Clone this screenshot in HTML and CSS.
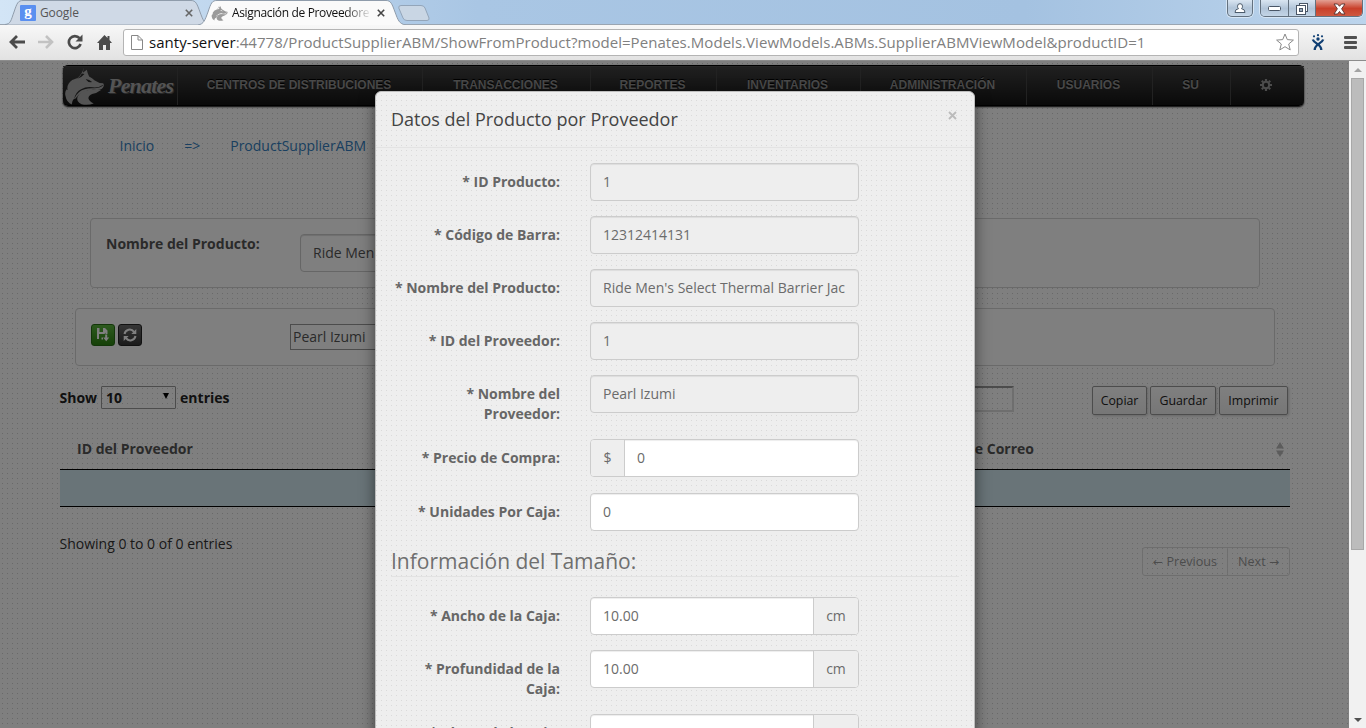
FILE: index.html
```html
<!DOCTYPE html>
<html lang="es">
<head>
<meta charset="utf-8">
<title>Asignación de Proveedores</title>
<link rel="stylesheet" href="styles.css">
</head>
<body>
<header class="chrome">
  <div class="tabstrip">
    <div class="tab tab-back">
      <svg class="tab-shape" width="206" height="25" viewBox="0 0 206 25"><path d="M0 24.500C6 24 6 20 9 12C12 3 13 .5 18 .5H186C191 .5 192 4 195 12C198 20 199 24 206 24.500" fill="#cfd9e6" stroke="#8f9cab"/></svg>
      <span class="g-icon">g</span><span class="tab-text">Google</span>
      <svg class="tab-x" width="8" height="8" viewBox="0 0 8 8"><path d="M.8.8l6.400 6.400M7.200.8L.8 7.200" stroke="#666" stroke-width="1.600"/></svg>
    </div>
    <div class="tab tab-front">
      <svg class="tab-shape" width="208" height="25" viewBox="0 0 208 25"><path d="M0 25C6 24 7 20 10 12C13 3 14 .5 19 .5H188C193 .5 194 4 197 12C200 20 201 24 208 25" fill="#fafafa" stroke="#8f9cab"/></svg>
      <svg class="tab-wolf" width="17" height="16" viewBox="40 33 124 116"><use href="#wolf"/></svg><span class="tab-text tab-title">Asignación de Proveedore</span>
      <svg class="tab-x" width="8" height="8" viewBox="0 0 8 8"><path d="M.8.8l6.400 6.400M7.200.8L.8 7.200" stroke="#444" stroke-width="1.600"/></svg>
    </div>
    <svg class="newtab" width="32" height="16" viewBox="0 0 32 16"><path d="M3 .5H23Q26 .5 27 3L31 13Q31.500 15.500 29 15.500H9Q6 15.500 5 13L.8 3Q.3.5 3 .5Z" fill="#c9d6e4" stroke="#93a5b9"/></svg>
    <div class="winbtns">
      <span class="wb wb-user"><svg width="12" height="11" viewBox="0 0 12 11"><path d="M3.500 3.200a2.500 2.500 0 1 1 5 0q0 1.600-1 2.500Q11 6 11 9.500H1Q1 6 4.500 5.700Q3.500 4.800 3.500 3.200Z" fill="#fff" stroke="#4c5b6b"/></svg></span>
      <span class="wb-set">
        <span class="wb"><svg width="13" height="6" viewBox="0 0 13 6"><rect x=".5" y=".5" width="12" height="4" rx="1" fill="#fff" stroke="#4a5666"/></svg></span><span class="wb"><svg width="13" height="12" viewBox="0 0 13 12"><rect x="3.500" y=".5" width="8" height="8" fill="#fff" stroke="#4a5666"/><rect x=".5" y="2.500" width="9" height="9" fill="#fff" stroke="#4a5666"/><rect x="3.500" y="5.500" width="3" height="3" fill="#9ab" stroke="#4a5666"/></svg></span><span class="wb wb-close"><svg width="13" height="12" viewBox="0 0 13 12"><path d="M1 1h3.500l2 2.300L8.500 1H12L8.600 5.800L12 11H8.500l-2-2.500L4.500 11H1l3.400-5.200Z" fill="#fff" stroke="#55302c" stroke-width=".9"/></svg></span>
      </span>
    </div>
  </div>
  <div class="toolbar">
    <svg class="i-back" width="16" height="14" viewBox="0 0 16 14"><path d="M8 1L2 7l6 6M2.500 7H16" fill="none" stroke="#4b4b4b" stroke-width="2.800"/></svg>
    <svg class="i-fwd" width="16" height="14" viewBox="0 0 16 14"><path d="M8 1l6 6l-6 6M13.500 7H0" fill="none" stroke="#c2c2c2" stroke-width="2.600"/></svg>
    <svg class="i-reload" width="16" height="16" viewBox="0 0 16 16"><path d="M12.500 4.200A6 6 0 1 0 13.600 10" fill="none" stroke="#4b4b4b" stroke-width="2.700"/><path d="M15.500.5v7H8.500Z" fill="#4b4b4b"/></svg>
    <svg class="i-home" width="15" height="15" viewBox="0 0 15 15"><path d="M7.500 0L0 8h2v7h4v-5h3v5h4V8h2L12.500 5V1h-2v2Z" fill="#4b4b4b"/></svg>
    <div class="urlbar">
      <svg width="12" height="15" viewBox="0 0 12 15"><path d="M.5.5h6.500l4.500 4.500v9.500H.5ZM7 .5V5h4.500" fill="#fff" stroke="#888"/></svg>
      <span class="url"><b>santy-server</b>:44778/ProductSupplierABM/ShowFromProduct?model=Penates.Models.ViewModels.ABMs.SupplierABMViewModel&amp;productID=1</span>
      <svg class="i-star" width="18" height="18" viewBox="0 0 18 18"><path d="M9 1l2.300 5.600l6.100.5l-4.700 3.900l1.500 5.900L9 13.700l-5.200 3.200l1.500-5.900L.6 7.100l6.100-.5Z" fill="#fff" stroke="#8a8a8a" stroke-linejoin="round"/></svg>
    </div>
    <svg class="i-ext" width="14" height="17" viewBox="0 0 14 17"><g fill="#103f73"><circle cx="7" cy="1.200" r="1.100"/><circle cx="3" cy="2.300" r="1.100"/><circle cx="11" cy="2.300" r="1.100"/><circle cx="7" cy="5" r="1.700"/></g><path d="M1.800 5.500C3 9.500 10.500 10 10.300 16M12.200 5.500C11 9.500 3.500 10 3.700 16" fill="none" stroke="#103f73" stroke-width="2.300"/></svg>
    <span class="i-menu"><i></i><i></i><i></i></span>
  </div>
</header>
<div class="viewport">
  <main class="page">
    <nav class="nav">
      <a class="brand"><svg width="41" height="40" viewBox="38 30 124 120"><g id="wolf"><path d="M101 34Q99 44 98 50L110 41Q112 52 117 61Q126 66 134 73Q148 82 159 82Q163 84 161 91Q157 103 140 102Q115 99 98 109Q84 115 76 128L70 130Q64 137 65 146Q49 141 45 118Q43 107 49 100L52 103Q48 84 66 72L82 66Q96 54 101 34Z"/><path d="M153 102Q140 112 126 114Q114 119 115 128Q118 137 131 143Q112 150 94 145Q77 138 82 122Q92 103 120 101Z"/><path class="cut" d="M107 70Q116 69 126 78Q114 80 107 70ZM95 52Q91 62 81 68Q94 65 103 54ZM160 88Q150 97 132 97Q104 95 87 108Q76 117 72 129Q76 108 93 100Q108 91 128 94Q146 96 160 86Z"/></g></svg><span class="brand-text">Penates</span></a>
      <a>CENTROS DE DISTRIBUCIONES</a><a>TRANSACCIONES</a><a>REPORTES</a><a>INVENTARIOS</a><a>ADMINISTRACIÓN</a><a>USUARIOS</a><a>SU</a>
      <a class="gear"><svg width="12" height="12" viewBox="-6 -6 12 12"><circle r="3.200" fill="none" stroke="#999" stroke-width="2"/><g stroke="#999" stroke-width="2.200"><path d="M0-6v2M0 6V4M-6 0h2M6 0H4M-4.200-4.200l1.400 1.400M4.200 4.200L2.800 2.800M-4.200 4.200l1.400-1.400M4.200-4.200L2.800-2.800"/></g></svg></a>
    </nav>
    <div class="crumbs"><a>Inicio</a><a>=&gt;</a><a>ProductSupplierABM</a></div>
    <section class="well well-product"><strong>Nombre del Producto:</strong><span class="field">Ride Men's Select</span></section>
    <section class="well well-tools">
      <span class="btn btn-save"><svg width="14" height="14" viewBox="0 0 14 14"><path d="M1 0H3.500V4H7V0H9L11.500 2.500V6H9.500V4.500L8.500 6H3V11H1Z M5.500 9.500H7V11.500H5.500Z" fill="#fff"/><path d="M9.200 6.500h2V9.500h2L10.200 13.200L7.200 9.500h2Z" fill="#fff"/></svg></span>
      <span class="btn btn-refresh"><svg width="14" height="14" viewBox="0 0 14 14"><path d="M1.500 6A5.300 5.300 0 0 1 11 3.800M12.500 8A5.300 5.300 0 0 1 3 10.200" fill="none" stroke="#fff" stroke-width="2"/><path d="M13.300 1v5h-5ZM.7 13V8h5Z" fill="#fff"/></svg></span>
      <span class="combo">Pearl Izumi</span>
    </section>
    <div class="table-tools"><strong>Show</strong><span class="select">10<i></i></span><strong>entries</strong><span class="search"></span><span class="tt">Copiar</span><span class="tt">Guardar</span><span class="tt">Imprimir</span></div>
    <div class="thead"><span>ID del Proveedor</span><span class="th-mail">Dirección de Correo</span><svg width="8" height="15" viewBox="0 0 8 15"><path d="M4 0l4 6.500H0ZM4 15L0 8.500h8Z" fill="#b8b8b8"/></svg></div>
    <div class="trow"></div>
    <div class="tfoot"><span>Showing 0 to 0 of 0 entries</span><span class="pager"><a><i>←</i> Previous</a><a>Next <i>→</i></a></span></div>
  </main>
  <div class="backdrop">
    <div class="modal">
      <div class="modal-head"><h4>Datos del Producto por Proveedor</h4><svg width="9" height="9" viewBox="0 0 9 9"><path d="M1 1l7 7M8 1L1 8" stroke="#bbb" stroke-width="1.900"/></svg></div>
      <form class="modal-body">
        <div class="row"><label>* ID Producto:</label><div class="ctl off"><input value="1"></div></div>
        <div class="row"><label>* Código de Barra:</label><div class="ctl off"><input value="12312414131"></div></div>
        <div class="row"><label>* Nombre del Producto:</label><div class="ctl off"><input value="Ride Men's Select Thermal Barrier Jac"></div></div>
        <div class="row"><label>* ID del Proveedor:</label><div class="ctl off"><input value="1"></div></div>
        <div class="row"><label>* Nombre del Proveedor:</label><div class="ctl off"><input value="Pearl Izumi"></div></div>
        <div class="row row-price"><label>* Precio de Compra:</label><div class="ctl"><span class="addon pre">$</span><input value="0"></div></div>
        <div class="row"><label>* Unidades Por Caja:</label><div class="ctl"><input value="0"></div></div>
        <h3>Información del Tamaño:</h3>
        <div class="row"><label>* Ancho de la Caja:</label><div class="ctl"><input value="10.00"><span class="addon">cm</span></div></div>
        <div class="row"><label>* Profundidad de la Caja:</label><div class="ctl"><input value="10.00"><span class="addon">cm</span></div></div>
        <div class="row"><label>* Altura de la Caja:</label><div class="ctl"><input value="10.00"><span class="addon">cm</span></div></div>
      </form>
    </div>
  </div>
  <div class="scrollbar"><i class="up"></i><span class="thumb"></span><i class="down"></i></div>
</div>
</body>
</html>
```
FILE: styles.css
```css
* { box-sizing: border-box; }
body { margin: 0; width: 1366px; height: 728px; overflow: hidden; font: 14px/20px "Open Sans", sans-serif; color: #333; }
svg { display: block; flex: none; }

/* Browser chrome */
.chrome { height: 61px; border-bottom: 1px solid #8c8c8c; background: linear-gradient(#f8f8f8 24px, #e2e2e2); }
.tabstrip { display: flex; height: 25px; padding-left: 5px; background: linear-gradient(90deg, #d3e5f6, #a9c6e4 35%, #a4c2e1 75%, #bcd4ec); border-bottom: 1px solid #9aa5b1; }
.tab { position: relative; display: flex; align-items: center; height: 25px; font-size: 12px; letter-spacing: -.1px; color: #555; }
.tab-shape { position: absolute; left: 0; top: 0; }
.tab > :not(.tab-shape) { position: relative; }
.tab-back { width: 193px; padding-left: 15px; }
.tab-front { width: 200px; padding-left: 13px; color: #111; z-index: 1; }
.tab-text { width: 136px; margin-left: 4px; white-space: nowrap; overflow: hidden; }
.tab-title { letter-spacing: -.35px; width: 137px; -webkit-mask-image: linear-gradient(90deg, #000 82%, transparent 102%); }
.tab-back .tab-text { margin-left: 4px; width: 145px; }
.tab-x { margin-left: 8px; }
.tab-back .tab-x { margin-left: 0; }
.g-icon { width: 16px; height: 16px; background: #5a8ff0; color: #fff; border-radius: 1px; text-align: center; font: bold 15px/13px "Liberation Serif", serif; }
.tab-wolf { fill: #9a9a9a; --cut: #fff; }
.cut { fill: var(--cut); }
.newtab { margin: 5px 0 0 0; }
.winbtns { display: flex; gap: 7px; margin-left: auto; padding-right: 3px; height: 18px; }
.wb { display: flex; align-items: center; justify-content: center; width: 27px; height: 17px; background: linear-gradient(#d9e5f1, #b1c4d8 50%, #c6d7e8); }
.wb-user, .wb-set { border: 1px solid #63717f; border-top: 0; border-radius: 0 0 5px 5px; overflow: hidden; box-shadow: 0 0 0 1px #d6e5f4; }
.wb-user { width: 26px; }
.wb-set { display: flex; height: 17px; }
.wb + .wb { border-left: 1px solid #63717f; }
.wb-set .wb-close { width: 47px; background: linear-gradient(#e3a093, #c9402a 50%, #cf5c43); }
.toolbar { display: flex; align-items: center; height: 35px; padding: 0 0 1px 9px; }
.i-fwd { margin-left: 13px; }
.i-reload { margin-left: 13px; }
.i-home { margin-left: 14px; }
.urlbar { display: flex; align-items: center; width: 1176px; height: 27px; margin-left: 11px; padding: 0 4px 0 7px; background: #fff; border: 1px solid #b4b4b4; border-radius: 3px; }
.url { width: 1134px; margin-left: 6px; font-size: 15px; letter-spacing: .045px; color: #808080; white-space: nowrap; }
.url b { font-weight: 400; color: #111; }
.i-star { margin-left: -7px; }
.i-ext { margin-left: 12px; }
.i-menu { display: grid; gap: 2px; margin-left: 19px; }
.i-menu i { width: 13px; height: 3px; border-radius: 1px; background: #505050; }

/* Web page */
.viewport { position: relative; height: 667px; overflow: hidden; }
.page { width: 1349px; height: 667px; padding-top: 4px; background-color: #fff; background-image: radial-gradient(circle at 2.500px 2.500px, #d2d2d2 .4px, transparent .8px); background-size: 5px 5px; }
.nav { display: grid; grid-template-columns: 115px 245px 168px 126px 144px 166px 126px 78px 73px; width: 1241px; height: 41px; margin-left: 63px; border-radius: 5px; background: linear-gradient(#414141, #141414); border-top: 1px solid #000; border-bottom: 1px solid #000; box-shadow: 0 1px 2px #000; }
.nav a { display: flex; align-items: center; justify-content: center; height: 39px; padding: 0 2px 3px 0; border-right: 1px solid #444; border-top: 1px solid #4a4a4a; color: #929292; font: bold 12px "Liberation Sans", Arial, sans-serif; letter-spacing: 0; text-shadow: 0 -1px #000; white-space: nowrap; }
.nav .brand { justify-content: flex-start; padding: 0; fill: #a8a8a8; --cut: #2a2a2a; }
.nav .gear { border-right: 0; padding-right: 4px; }
.brand-text { margin-left: 4px; font: italic bold 22px "Liberation Serif", serif; letter-spacing: -.8px; color: #a8a8a8; text-shadow: 1px 1px #555; }
.crumbs { display: flex; gap: 30px; margin: 30px 0 0 119.500px; color: #347fc0; }
.well { display: flex; border: 1px solid #d5d5d5; border-radius: 4px; background: #fff; }
.well-product { width: 1170px; height: 70px; margin: 62px 0 0 90px; padding: 15px; }
.well-product strong { width: 194px; color: #555; }
.field { width: 270px; height: 38px; border: 1px solid #ccc; border-radius: 4px; padding: 8px 12px; color: #555; box-shadow: inset 0 1px 1px #ddd; }
.well-tools { width: 1200px; height: 58px; margin: 20px 0 0 75px; padding: 15px; gap: 3px; }
.btn { width: 24px; height: 22px; border-radius: 3px; border: 1px solid #276c14; padding: 3px 4px; background: linear-gradient(#5bb53e, #2c8211); }
.btn-refresh { background: linear-gradient(#6b6b6b, #373737); border-color: #222; }
.combo { width: 200px; height: 26px; margin-left: 145px; border: 1px solid #999; padding: 2px 2px; color: #555; }
.table-tools { display: flex; align-items: flex-start; width: 1228px; height: 30px; margin: 20px 0 0 59.500px; }
.table-tools strong { padding-top: 2px; color: #222; }
.select { display: flex; align-items: center; justify-content: space-between; width: 75px; height: 23px; margin: 0 4px; border: 1px solid #999; border-radius: 1px; padding: 0 6px 0 4px; font-weight: 700; color: #222; }
.select i { border: 3.500px solid transparent; border-top: 6px solid #000; border-bottom: 0; margin-bottom: 3px; }
.search { width: 200px; height: 26px; margin-left: auto; margin-right: 78px; border: 2px solid; border-color: #999 #ddd #ddd #999; }
.tt { height: 29px; margin-right: 3px; padding: 4px 8px; border: 1px solid #999; border-radius: 2px; background: linear-gradient(#fff, #eee); font-size: 12.350px; line-height: 20px; color: #222; box-shadow: 1px 1px 3px #ccc; }
.tt:last-child { margin-right: 0; }
.thead { display: flex; align-items: center; width: 1230px; height: 54px; margin-left: 60px; padding: 13px 6px 0 17px; font-weight: 700; color: #555; border-bottom: 1px solid #000; }
.th-mail { width: 841px; text-align: right; }
.thead span:first-child { width: 116px; white-space: nowrap; }
.thead svg { margin-left: auto; }
.trow { width: 1230px; height: 37px; margin-left: 60px; background: #d3e8f0; border-bottom: 1px solid #000; }
.tfoot { display: flex; justify-content: space-between; align-items: flex-start; width: 1230.500px; margin: 27px 0 0 59.500px; color: #333; }
.pager { display: flex; height: 29px; margin-top: 13px; border: 1px solid #ddd; border-radius: 3px; font-size: 12.600px; line-height: 27px; color: #999; }
.pager a { padding: 0 10px; }
.pager i { font: 12px "DejaVu Sans", sans-serif; }
.pager a + a { border-left: 1px solid #ddd; }

/* Dialog */
.backdrop { position: absolute; inset: 0 17px 0 0; display: flex; justify-content: center; align-items: flex-start; padding-top: 30px; background: rgba(0, 0, 0, .5); }
.modal { width: 600px; height: 700px; margin-left: 1px; border: 1px solid #bdbdbd; border-radius: 6px; background-color: #eee; background-image: radial-gradient(circle at 2.500px 2.500px, #dadada .4px, transparent .8px); background-position: 3px 1px; background-size: 5px 5px; box-shadow: 0 5px 15px rgba(0, 0, 0, .5); }
.modal-head { display: flex; justify-content: space-between; height: 56px; padding: 15px 17px 15px 15px; border-bottom: 1px solid #e3e3e3; }
.modal-head svg { margin-top: 4px; }
h3, h4 { margin: 0; font-weight: 400; }
h4 { font-size: 18px; line-height: 25px; color: #444; }
h3 { height: 31px; margin-bottom: 20px; border-bottom: 1px solid #e2e2e2; font-size: 21px; line-height: 30px; color: #6f6f6f; }
.modal-body { padding: 15px 15px 0; }
.row { display: grid; grid-template-columns: 169px 269px; column-gap: 30px; align-items: start; margin-bottom: 15px; }
.row-price { margin-bottom: 16px; }
.row label { padding-top: 9px; text-align: right; font-weight: 700; color: #666; }
.ctl { display: flex; height: 38px; border: 1px solid #ccc; border-radius: 4px; background: #fff; overflow: hidden; color: #6b6b6b; box-shadow: inset 0 1px 1px rgba(0, 0, 0, .075); }
.off { background: #eee; }
.ctl input { flex: 1; min-width: 0; padding: 0; margin: 0 12px; border: 0; background: none; font: inherit; color: inherit; }
.addon { width: 45px; border-left: 1px solid #ccc; background: #eee; text-align: center; line-height: 36px; }
.pre { width: 34px; border-left: 0; border-right: 1px solid #ccc; }

/* Page scrollbar */
.scrollbar { position: absolute; inset: 0 0 0 auto; width: 17px; background: #f1f1f1; display: flex; flex-direction: column; align-items: center; }
.thumb { width: 13px; height: 472px; margin: 6px 0 auto 0; background: #bcbcbc; border: 1px solid #a8a8a8; }
.up { border: 4px solid transparent; border-bottom-color: #a3a3a3; border-top: 0; margin-top: 7px; }
.down { border: 4px solid transparent; border-top-color: #505050; border-bottom: 0; margin-bottom: 6px; }
```
